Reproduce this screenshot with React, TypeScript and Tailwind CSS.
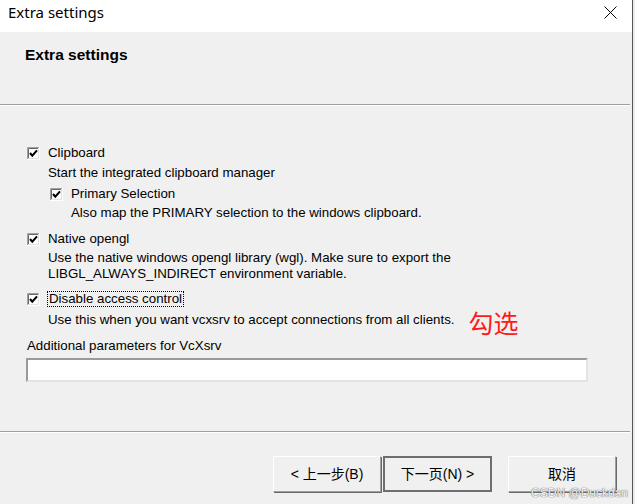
import React from "react";

const UI = { fontFamily: '"Liberation Sans", Arial, sans-serif' };
const CJK = { fontFamily: '"Liberation Sans", "Noto Sans CJK SC", sans-serif' };

function Check() {
  return (
    <svg width="13" height="13" viewBox="0 0 13 13" className="shrink-0 block">
      <rect x="0" y="0" width="13" height="13" fill="#ffffff" />
      <path d="M0.5 12.5 V0.5 H12.5" stroke="#a0a0a0" fill="none" />
      <path d="M1.5 11.5 V1.5 H11.5" stroke="#696969" fill="none" />
      <path d="M12.5 0 V12.5 H0" stroke="#ffffff" fill="none" />
      <path d="M11.5 1 V11.5 H1" stroke="#e3e3e3" fill="none" />
      <path d="M3 6 L5.3 8.6 L10 3.4" stroke="#000" strokeWidth="2.1" fill="none" />
    </svg>
  );
}

function Btn({ children, def }: { children: React.ReactNode; def?: boolean }) {
  return (
    <div
      className={
        "h-[36px] flex items-center justify-center text-[14px] text-black bg-[#f0f0f0] " +
        (def
          ? "w-[109px] border-2 border-[#6e6e6e]"
          : "w-[108px] border border-t-white border-l-white border-r-[#a0a0a0] border-b-[#a0a0a0] shadow-[1px_1px_0_#696969]")
      }
      style={CJK}
    >
      {children}
    </div>
  );
}

export default function App() {
  return (
    <div className="w-[635px] h-[504px] flex bg-[#f0f0f0] overflow-hidden text-[13.3px] text-black" style={UI}>
      <div className="w-[632px] h-full flex flex-col relative">
        {/* title bar */}
        <div className="h-[32px] bg-white flex items-start justify-between pl-[8px] pr-[15px] shrink-0">
          <span className="text-[15px] leading-[20px] mt-[2px]" style={{ fontFamily: '"Noto Sans", "Open Sans", sans-serif' }}>
            Extra settings
          </span>
          <svg width="13" height="13" viewBox="0 0 13 13" className="block mt-[6px]">
            <path d="M0.5 0.5 L12.5 12.5 M12.5 0.5 L0.5 12.5" stroke="#000" strokeWidth="1" />
          </svg>
        </div>
        {/* header */}
        <div className="h-[72px] shrink-0 pl-[25px] pt-[14px]">
          <div className="font-bold text-[15.5px] leading-[18px]">Extra settings</div>
        </div>
        <div className="h-[1px] bg-[#a0a0a0] mr-[2px] shrink-0" />
        <div className="h-[1px] bg-white mr-[2px] shrink-0" />

        {/* content */}
        <div className="flex-1 flex flex-col pl-[27px] relative">
          <div className="mt-[39px] h-[16px] flex items-center gap-[8px]">
            <Check />
            <span className="leading-[16px]">Clipboard</span>
          </div>
          <div className="mt-[4px] h-[16px] leading-[16px] pl-[21px]">Start the integrated clipboard manager</div>
          <div className="mt-[5px] h-[16px] flex items-center gap-[8px] pl-[23px]">
            <Check />
            <span className="leading-[16px]">Primary Selection</span>
          </div>
          <div className="mt-[3px] h-[16px] leading-[16px] pl-[44px]">
            Also map the PRIMARY selection to the windows clipboard.
          </div>
          <div className="mt-[10px] h-[16px] flex items-center gap-[8px]">
            <Check />
            <span className="leading-[16px]">Native opengl</span>
          </div>
          <div className="mt-[3px] leading-[16px] pl-[21px]">
            <div>Use the native windows opengl library (wgl). Make sure to export the</div>
            <div>LIBGL_ALWAYS_INDIRECT environment variable.</div>
          </div>
          <div className="mt-[9px] h-[16px] flex items-center gap-[7px]">
            <Check />
            <span className="leading-[14px] border border-dotted border-black px-[1px]">Disable access control</span>
          </div>
          <div className="mt-[5px] h-[16px] leading-[16px] pl-[21px] flex items-center">
            <span>Use this when you want vcxsrv to accept connections from all clients.</span>
            <span
              className="ml-[14px] text-[25px] leading-[26px] text-[#ff1a1a] relative top-[2px]"
              style={{ fontFamily: '"Noto Sans CJK SC", sans-serif' }}
            >
              勾选
            </span>
          </div>
          <div className="mt-[10px] h-[16px] leading-[16px]">Additional parameters for VcXsrv</div>
          <div className="mt-[4px] ml-[-1px] w-[562px] h-[24px] bg-white border-t-2 border-l-2 border-t-[#9a9a9a] border-l-[#9a9a9a] border-r-2 border-b-2 border-r-[#e3e3e3] border-b-[#e3e3e3]" />
        </div>

        {/* footer */}
        <div className="h-[1px] bg-[#a0a0a0] mr-[2px] shrink-0" />
        <div className="h-[1px] bg-white mr-[2px] shrink-0" />
        <div className="h-[71px] shrink-0 flex items-start justify-end pt-[23px] pr-[16px]">
          <div className="flex gap-[2px]">
            <Btn>&lt; 上一步(B)</Btn>
            <Btn def>下一页(N) &gt;</Btn>
          </div>
          <div className="ml-[16px]">
            <Btn>取消</Btn>
          </div>
        </div>
        <div
          className="absolute right-[4px] bottom-[5px] text-[12px] leading-[12px] text-[#f4f4f4]"
          style={{ textShadow: "0 0 1px #6a6a6a, 0 0 1px #6a6a6a" }}
        >
          CSDN @Duckdan
        </div>
      </div>
      <div className="w-[1px] h-full bg-[#555555]" />
      <div className="flex-1 h-full bg-[#ececec]" />
    </div>
  );
}
